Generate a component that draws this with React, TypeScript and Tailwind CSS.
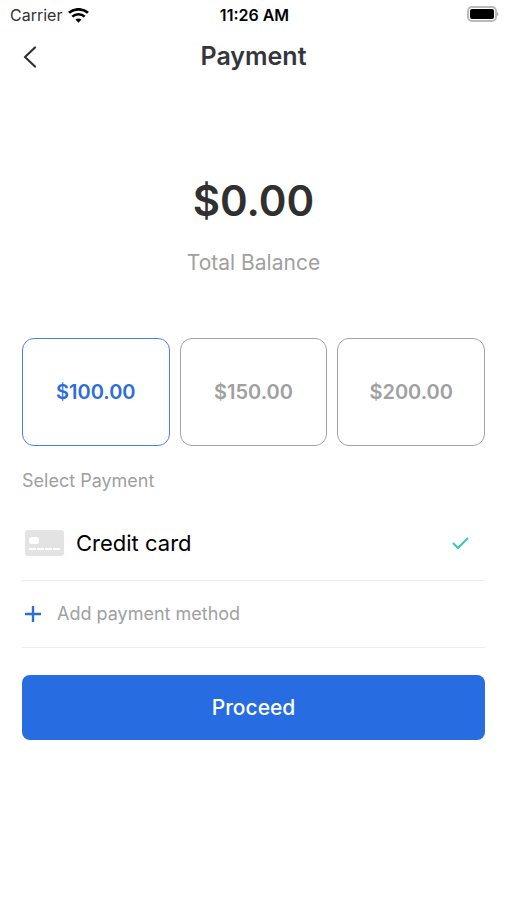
import { useState } from "react";

const amounts = ["$100.00", "$150.00", "$200.00"];

const StatusBar = () => (
  <div className="grid h-[30px] grid-cols-3 items-center pr-2 pl-[10px] text-base text-black">
    <div className="flex items-center gap-[6px]">
      <span className="text-[#333333]">Carrier</span>
      <svg width="21" height="15" viewBox="0 0 21 15" fill="none" aria-hidden="true">
        <path d="M1 4.800C6.200.200 14.800.200 20 4.800" stroke="currentColor" strokeWidth="2.800" />
        <path d="M4.300 8.600C7.800 5.400 13.200 5.400 16.700 8.600" stroke="currentColor" strokeWidth="2.600" />
        <path d="M7.500 11.600C9.200 10 11.800 10 13.500 11.600L10.500 14.700Z" fill="currentColor" />
      </svg>
    </div>
    <span className="text-center font-semibold">11:26 AM</span>
    <svg className="justify-self-end" width="33" height="20" viewBox="0 0 33 20" fill="none" aria-hidden="true">
      <rect x="2" y="2" width="28" height="14" rx="4" stroke="#b9b9b9" strokeWidth="2" />
      <rect x="4" y="4" width="24" height="10" rx="2" fill="#000000" />
      <path d="M31 7c2 .8 2 3.200 0 4Z" fill="#b0b0b0" />
    </svg>
  </div>
);

const CardIcon = () => (
  <svg width="39" height="26" viewBox="0 0 39 26" aria-hidden="true">
    <rect width="39" height="26" rx="3" fill="#e3e3e3" />
    <rect x="4" y="7" width="10" height="7" rx="2" fill="#ffffff" />
    <path d="M4 19h31" stroke="#ffffff" strokeWidth="2" strokeDasharray="7 1" />
  </svg>
);

const App = () => {
  const [amount, setAmount] = useState(amounts[0]);
  const [cardSelected, setCardSelected] = useState(true);

  return (
    <div className="min-h-screen bg-white font-['Inter',sans-serif]">
      <StatusBar />

      <header className="grid h-[54px] grid-cols-[40px_1fr_40px] items-center px-[10px]">
        <button type="button" aria-label="Back" className="flex h-10 w-10 items-center justify-center text-[#303135]">
          <svg width="14" height="22" viewBox="0 0 14 22" fill="none" aria-hidden="true">
            <path d="M12 1.500 2 11l10 9.500" stroke="currentColor" strokeWidth="2.200" strokeLinecap="round" strokeLinejoin="round" />
          </svg>
        </button>
        <h1 className="text-center text-[25px] font-semibold text-[#35363b]">Payment</h1>
      </header>

      <main className="px-[22px] pt-[89px]">
        <section className="text-center">
          <p className="text-[42px] leading-14 font-semibold text-[#303030]">$0.00</p>
          <p className="mt-[18px] text-[21px] leading-8 text-[#a0a0a0]">Total Balance</p>
        </section>

        <div className="mt-[59px] grid grid-cols-3 gap-[10px]">
          {amounts.map((value) => (
            <button
              key={value}
              type="button"
              aria-pressed={amount === value}
              onClick={() => setAmount(value)}
              className={`h-[108px] rounded-xl border text-xl font-semibold ${
                amount === value ? "border-[#4b80df] text-[#2d6cdb]" : "border-[#a3a3a3] text-[#a0a0a0]"
              }`}
            >
              {value}
            </button>
          ))}
        </div>

        <h2 className="mt-[21px] text-lg leading-7 text-[#a0a0a0]">Select Payment</h2>

        {/* Payment methods */}
        <button
          type="button"
          aria-pressed={cardSelected}
          onClick={() => setCardSelected(!cardSelected)}
          className="mt-[11px] flex h-[75px] w-full items-center border-b border-[#eeeeee] pr-4 pl-[3px] text-[22px] text-black"
        >
          <CardIcon />
          <span className="ml-3">Credit card</span>
          {cardSelected && (
            <svg className="ml-auto" width="17" height="13" viewBox="0 0 17 13" fill="none" aria-hidden="true">
              <path d="M1 6 6 11 16 1" stroke="#35cdb0" strokeWidth="2" />
            </svg>
          )}
        </button>
        <button
          type="button"
          className="flex h-[67px] w-full items-center gap-4 border-b border-[#eeeeee] pl-[3px] text-lg text-[#a0a0a0]"
        >
          <svg width="16" height="16" viewBox="0 0 16 16" fill="none" aria-hidden="true">
            <path d="M8 0v16M0 8h16" stroke="#2d6cdb" strokeWidth="2.400" />
          </svg>
          Add payment method
        </button>

        <button
          type="button"
          className="mt-[27px] h-[65px] w-full rounded-lg bg-[#276de1] text-[21px] font-medium text-white"
        >
          Proceed
        </button>
      </main>
    </div>
  );
};

export default App;
